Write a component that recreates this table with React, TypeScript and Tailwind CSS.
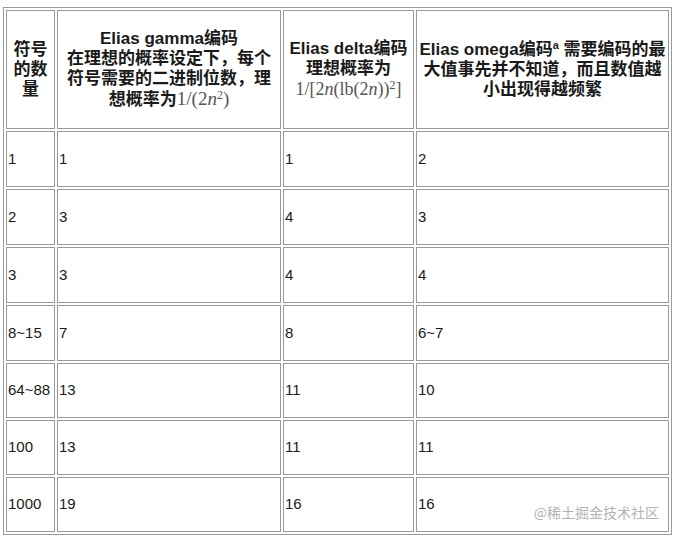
import React from "react";

// =========================
// Data
// =========================

const rows = [
  ["1", "1", "1", "2"],
  ["2", "3", "4", "3"],
  ["3", "3", "4", "4"],
  ["8~15", "7", "8", "6~7"],
  ["64~88", "13", "11", "10"],
  ["100", "13", "11", "11"],
  ["1000", "19", "16", "16"],
];

const rowHeights = ["h-[56px]", "h-[56px]", "h-[56px]", "h-[56px]", "h-[55px]", "h-[55px]", "h-[55px]"];

const font = "font-['Liberation_Sans','Noto_Sans_CJK_SC',sans-serif]";
const mathFont = "font-['Liberation_Serif','DejaVu_Serif',serif] font-normal text-[#555]";

const cell = "border border-[#999] p-px align-middle";

// =========================
// Main
// =========================

export default function App() {
  return (
    <div className={`relative w-[676px] h-[536px] bg-white overflow-hidden text-[#1a1a1a] ${font}`}>
      <div className="pl-[3px] pt-[7px]">
        <table className="table-fixed w-[669px] border-separate border-spacing-[2px] border border-[#999]">
          <colgroup>
            <col className="w-[49px]" />
            <col className="w-[224px]" />
            <col className="w-[131px]" />
            <col className="w-[253px]" />
          </colgroup>
          <thead>
            <tr className="h-[119px]">
              <th className={`${cell} text-center text-[17px] leading-[20px] font-bold`}>
                符号
                <br />
                的数
                <br />量
              </th>
              <th className={`${cell} text-center text-[17px] leading-[20px] font-bold`}>
                Elias gamma编码
                <br />
                在理想的概率设定下，每个
                <br />
                符号需要的二进制位数，理
                <br />
                想概率为
                <span className={`${mathFont} text-[19px]`}>
                  1/(2<i>n</i>
                  <sup className="text-[12px] leading-none">2</sup>)
                </span>
              </th>
              <th className={`${cell} text-center text-[17px] leading-[20px] font-bold`}>
                Elias delta编码
                <br />
                理想概率为
                <br />
                <span className={`${mathFont} text-[18px]`}>
                  1/[2<i>n</i>(lb(2<i>n</i>))
                  <sup className="text-[12px] leading-none">2</sup>]
                </span>
              </th>
              <th className={`${cell} text-center text-[17px] leading-[20px] font-bold`}>
                Elias omega编码<sup className="text-[11px] leading-none">a</sup> 需要编码的最
                <br />
                大值事先并不知道，而且数值越
                <br />
                小出现得越频繁
              </th>
            </tr>
          </thead>
          <tbody>
            {rows.map((r, i) => (
              <tr key={i} className={rowHeights[i]}>
                {r.map((v, j) => (
                  <td key={j} className={`${cell} text-left text-[15px]`}>
                    {v}
                  </td>
                ))}
              </tr>
            ))}
          </tbody>
        </table>
      </div>

      {/* watermark */}
      <div className="absolute right-[17px] top-[502px] text-[14px] leading-[20px] text-[#b3b3b3] font-['Noto_Sans_CJK_SC',sans-serif]">
        @稀土掘金技术社区
      </div>
    </div>
  );
}
